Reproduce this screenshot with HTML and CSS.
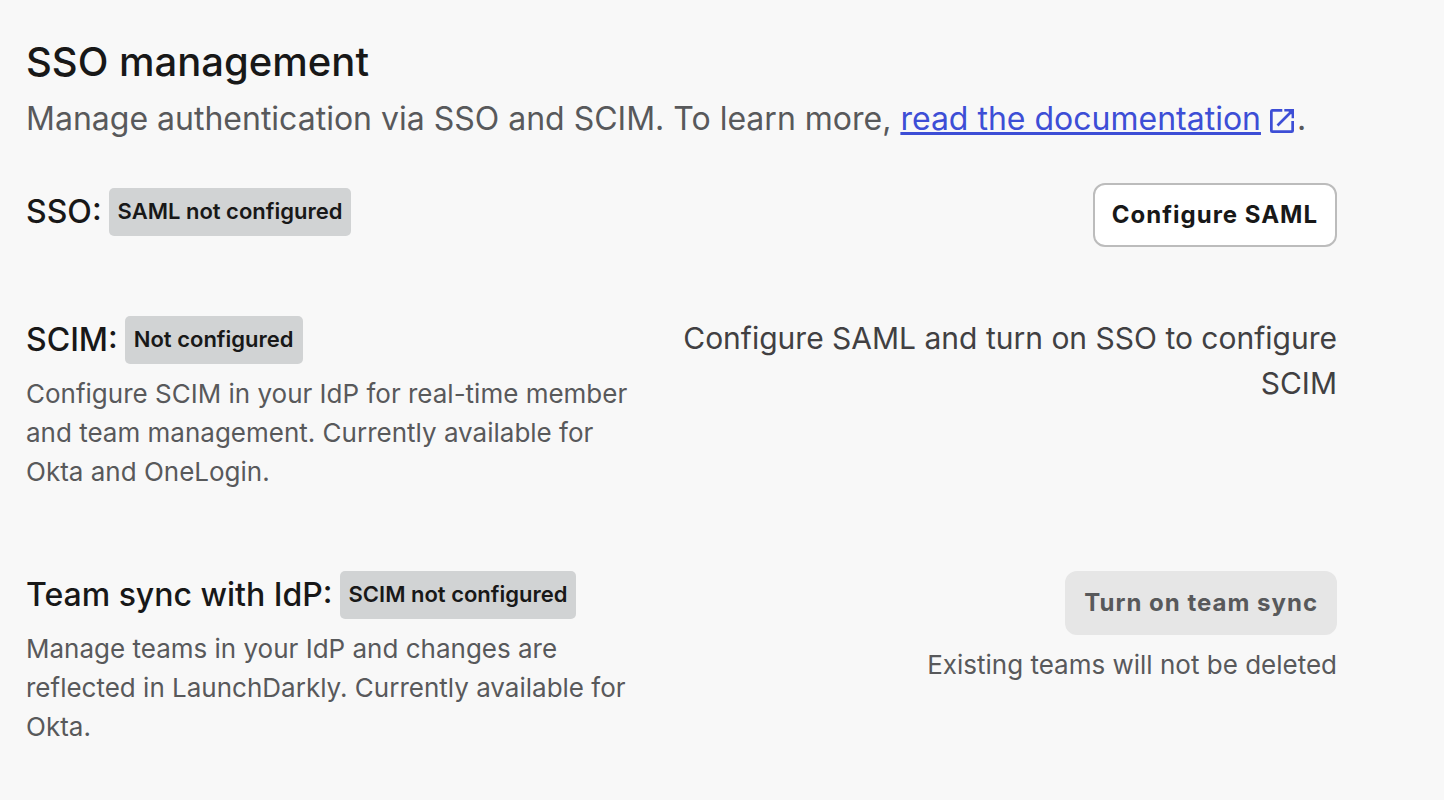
FILE: index.html
```html
<!DOCTYPE html>
<html lang="en">
<head>
<meta charset="utf-8">
<title>SSO management</title>
<meta name="viewport" content="width=device-width, initial-scale=1">
<link rel="stylesheet" href="styles.css">
</head>
<body>
<main class="page">
  <header class="intro">
    <h1 class="title">SSO management</h1>
    <p class="lead">Manage authentication via SSO and SCIM. To learn more, <a class="link" href="#docs">read the documentation</a><svg class="external" viewBox="0 0 24 24" fill="none" stroke="currentColor" stroke-width="2.700" aria-hidden="true"><path d="M12.300 1.350H2.350Q1.350 1.350 1.350 2.350V21.650Q1.350 22.650 2.350 22.650H21.650Q22.650 22.650 22.650 21.650V12"/><path d="M22.500 1.500L7.500 16.500"/><path d="M14.300 0H24V9.300H21.600V5.500L18.500 2.500H14.300Z" fill="currentColor" stroke="none"/></svg>.</p>
  </header>

  <section class="row row-single">
    <div class="info">
      <h2 class="heading">SSO: <span class="badge">SAML not configured</span></h2>
    </div>
    <div class="action">
      <button class="button" type="button">Configure SAML</button>
    </div>
  </section>

  <section class="row">
    <div class="info">
      <h2 class="heading">SCIM: <span class="badge">Not configured</span></h2>
      <p class="description">Configure SCIM in your IdP for real-time member and team management. Currently available for Okta and OneLogin.</p>
    </div>
    <div class="action">
      <p class="notice">Configure SAML and turn on SSO to configure SCIM</p>
    </div>
  </section>

  <section class="row">
    <div class="info">
      <h2 class="heading">Team sync with IdP: <span class="badge">SCIM not configured</span></h2>
      <p class="description">Manage teams in your IdP and changes are reflected in LaunchDarkly. Currently available for Okta.</p>
    </div>
    <div class="action">
      <button class="button" type="button" disabled>Turn on team sync</button>
      <p class="hint">Existing teams will not be deleted</p>
    </div>
  </section>
</main>
</body>
</html>
```
FILE: styles.css
```css
* {
  box-sizing: border-box;
}

body {
  margin: 0;
  background: #f8f8f8;
  color: #181818;
  font-family: Inter, "Liberation Sans", sans-serif;
}

h1, h2, p {
  margin: 0;
}

.page {
  padding: 38px 107px 40px 26px;
}

.intro {
  margin-bottom: 40px;
}

.title {
  font-size: 40px;
  font-weight: 500;
  line-height: 48px;
}

.lead {
  margin-top: 9px;
  color: #58595b;
  font-size: 32px;
  line-height: 48px;
}

.link {
  color: #3d4ed6;
  text-decoration-thickness: 3px;
}

.external {
  width: 24px;
  height: 24px;
  margin: 0 3px 0 9px;
  color: #3d4ed6;
  vertical-align: -3px;
}

.row {
  display: grid;
  grid-template-columns: 1fr 1fr;
  margin-bottom: 80px;
}

.row:last-child {
  margin-bottom: 0;
}

.row-single {
  margin-bottom: 69px;
}

.row-single .info {
  padding-top: 5px;
}

.info {
  padding-right: 28px;
}

.heading {
  display: flex;
  align-items: center;
  gap: 7px;
  font-size: 32px;
  font-weight: 500;
  line-height: 48px;
}

.badge {
  padding: 0 9px 2px;
  border-radius: 5px;
  background: #d1d3d4;
  font-size: 22px;
  font-weight: 600;
  line-height: 46px;
}

.description {
  margin-top: 10px;
  color: #58595b;
  font-size: 26px;
  line-height: 39px;
}

.action {
  display: flex;
  flex-direction: column;
  align-items: flex-end;
  text-align: right;
}

.button {
  height: 64px;
  padding: 0 17px;
  border: 2px solid #bcbcbc;
  border-radius: 12px;
  background: #fff;
  color: #181818;
  font: 700 24px/36px Inter, "Liberation Sans", sans-serif;
  letter-spacing: 1px;
}

.button:disabled {
  border-color: #e6e6e6;
  background: #e6e6e6;
  color: #58595b;
}

.notice {
  color: #414042;
  font-size: 30px;
  line-height: 45px;
}

.hint {
  margin-top: 10px;
  color: #58595b;
  font-size: 26px;
  line-height: 39px;
}
```
